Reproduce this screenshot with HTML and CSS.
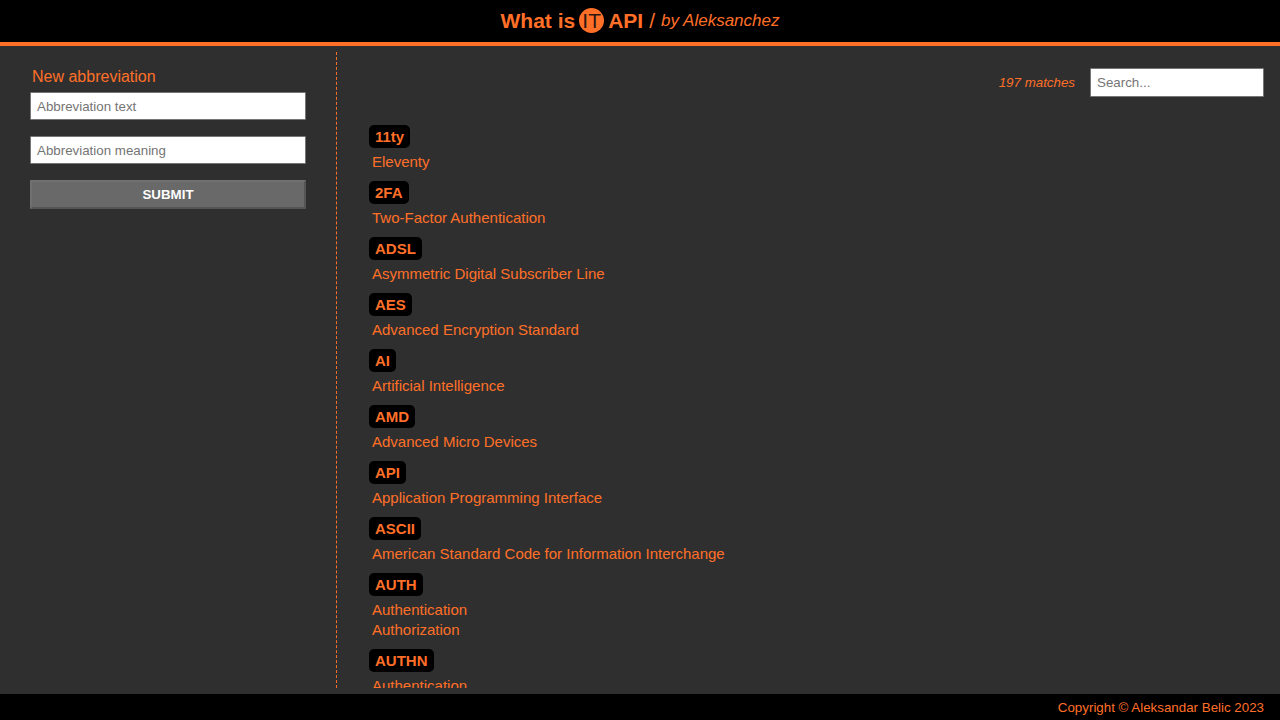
FILE: index.html
```html
<!DOCTYPE html>
<html lang="en">
<head>
<meta charset="utf-8">
<title>What is IT API</title>
<link rel="stylesheet" href="styles.css">
</head>
<body>
<header class="header">
  <h1 class="title">What is <span class="logo">IT</span> API</h1>
  <span class="slash">/</span>
  <em class="author">by Aleksanchez</em>
</header>
<main class="main">
  <aside class="sidebar">
    <form class="form">
      <h2 class="form-title">New abbreviation</h2>
      <input class="field" type="text" placeholder="Abbreviation text" aria-label="Abbreviation text">
      <input class="field" type="text" placeholder="Abbreviation meaning" aria-label="Abbreviation meaning">
      <button class="submit" type="submit">SUBMIT</button>
    </form>
  </aside>
  <section class="content">
    <div class="toolbar">
      <em class="matches">197 matches</em>
      <input class="field search" type="text" placeholder="Search..." aria-label="Search">
    </div>
    <dl class="list">
      <div class="entry"><dt class="term">11ty</dt><dd class="meaning">Eleventy</dd></div>
      <div class="entry"><dt class="term">2FA</dt><dd class="meaning">Two-Factor Authentication</dd></div>
      <div class="entry"><dt class="term">ADSL</dt><dd class="meaning">Asymmetric Digital Subscriber Line</dd></div>
      <div class="entry"><dt class="term">AES</dt><dd class="meaning">Advanced Encryption Standard</dd></div>
      <div class="entry"><dt class="term">AI</dt><dd class="meaning">Artificial Intelligence</dd></div>
      <div class="entry"><dt class="term">AMD</dt><dd class="meaning">Advanced Micro Devices</dd></div>
      <div class="entry"><dt class="term">API</dt><dd class="meaning">Application Programming Interface</dd></div>
      <div class="entry"><dt class="term">ASCII</dt><dd class="meaning">American Standard Code for Information Interchange</dd></div>
      <div class="entry"><dt class="term">AUTH</dt><dd class="meaning">Authentication</dd><dd class="meaning">Authorization</dd></div>
      <div class="entry"><dt class="term">AUTHN</dt><dd class="meaning">Authentication</dd></div>
    </dl>
  </section>
</main>
<footer class="footer"><small class="copyright">Copyright © Aleksandar Belic 2023</small></footer>
</body>
</html>
```
FILE: styles.css
```css
* {
  box-sizing: border-box;
}

body {
  display: flex;
  flex-direction: column;
  height: 100vh;
  margin: 0;
  background: #2f2f2f;
  color: #ff6f28;
  font-family: "Liberation Sans", Arial, sans-serif;
  font-size: 16px;
}

.header {
  display: flex;
  align-items: center;
  justify-content: center;
  gap: 6px;
  padding: 8px 16px 9px;
  background: #000;
  border-bottom: 4px solid #ff6f28;
}

.title {
  display: flex;
  align-items: center;
  gap: 4px;
  margin: 0;
  font-size: 21px;
  line-height: 25px;
}

.logo {
  display: flex;
  align-items: center;
  justify-content: center;
  width: 25px;
  height: 25px;
  border-radius: 50%;
  background: #ff6f28;
  color: #301810;
  font-weight: 400;
}

.slash {
  font-size: 21px;
  line-height: 25px;
}

.author {
  font-size: 17px;
}

.main {
  display: flex;
  flex: 1;
  min-height: 0;
  padding: 6px 0;
}

.sidebar {
  flex: 0 0 337px;
  padding: 15px 30px;
  border-right: 1px dashed #ff6f28;
}

.form {
  display: flex;
  flex-direction: column;
  gap: 16px;
}

.form-title {
  margin: 0 2px -11px;
  font-size: 16px;
  font-weight: 400;
  line-height: 20px;
}

.field {
  width: 100%;
  height: 28px;
  padding: 0 6px;
  border: 1px solid #767676;
  border-radius: 1px;
  background: #fff;
  color: #000;
  font-family: inherit;
  font-size: smaller;
}

.field::placeholder {
  color: #757575;
}

.submit {
  height: 29px;
  padding: 0;
  border: 2px solid;
  border-color: #707070 #555 #555 #707070;
  background: #696969;
  color: #fff;
  font-family: inherit;
  font-size: smaller;
  font-weight: 700;
}

.content {
  display: flex;
  flex: 1;
  flex-direction: column;
  min-width: 0;
  padding: 16px 16px 0 32px;
}

.toolbar {
  display: flex;
  align-items: center;
  justify-content: flex-end;
  gap: 15px;
}

.matches {
  font-size: smaller;
}

.search {
  width: 174px;
  height: 29px;
}

.list {
  flex: 1;
  min-height: 0;
  margin: 28px 0 0;
  overflow: hidden;
  font-size: 15px;
}

.entry {
  padding-bottom: 9px;
}

.term {
  width: fit-content;
  margin-bottom: 4px;
  padding: 0 6px;
  border-radius: 5px;
  background: #000;
  font-weight: 700;
  line-height: 23px;
}

.meaning {
  margin: 0 3px;
  line-height: 20px;
}

.footer {
  display: flex;
  justify-content: flex-end;
  padding: 6px 16px 4px;
  background: #000;
  line-height: 16px;
}

.copyright {
  font-size: smaller;
}
```
